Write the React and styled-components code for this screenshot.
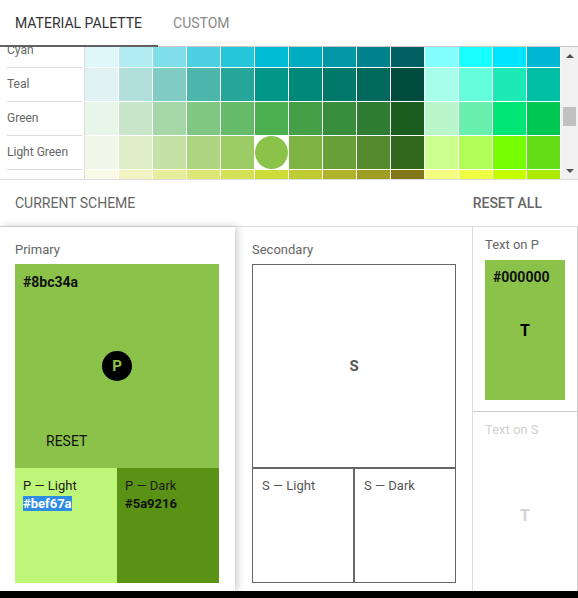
import React, { useRef, useLayoutEffect } from "react";
import styled, { createGlobalStyle } from "styled-components";

const palette = [
  ["Red", "ffebee ffcdd2 ef9a9a e57373 ef5350 f44336 e53935 d32f2f c62828 b71c1c ff8a80 ff5252 ff1744 d50000"],
  ["Pink", "fce4ec f8bbd0 f48fb1 f06292 ec407a e91e63 d81b60 c2185b ad1457 880e4f ff80ab ff4081 f50057 c51162"],
  ["Purple", "f3e5f5 e1bee7 ce93d8 ba68c8 ab47bc 9c27b0 8e24aa 7b1fa2 6a1b9a 4a148c ea80fc e040fb d500f9 aa00ff"],
  ["Deep Purple", "ede7f6 d1c4e9 b39ddb 9575cd 7e57c2 673ab7 5e35b1 512da8 4527a0 311b92 b388ff 7c4dff 651fff 6200ea"],
  ["Indigo", "e8eaf6 c5cae9 9fa8da 7986cb 5c6bc0 3f51b5 3949ab 303f9f 283593 1a237e 8c9eff 536dfe 3d5afe 304ffe"],
  ["Blue", "e3f2fd bbdefb 90caf9 64b5f6 42a5f5 2196f3 1e88e5 1976d2 1565c0 0d47a1 82b1ff 448aff 2979ff 2962ff"],
  ["Light Blue", "e1f5fe b3e5fc 81d4fa 4fc3f7 29b6f6 03a9f4 039be5 0288d1 0277bd 01579b 80d8ff 40c4ff 00b0ff 0091ea"],
  ["Cyan", "e0f7fa b2ebf2 80deea 4dd0e1 26c6da 00bcd4 00acc1 0097a7 00838f 006064 84ffff 18ffff 00e5ff 00b8d4"],
  ["Teal", "e0f2f1 b2dfdb 80cbc4 4db6ac 26a69a 009688 00897b 00796b 00695c 004d40 a7ffeb 64ffda 1de9b6 00bfa5"],
  ["Green", "e8f5e9 c8e6c9 a5d6a7 81c784 66bb6a 4caf50 43a047 388e3c 2e7d32 1b5e20 b9f6ca 69f0ae 00e676 00c853"],
  ["Light Green", "f1f8e9 dcedc8 c5e1a5 aed581 9ccc65 8bc34a 7cb342 689f38 558b2f 33691e ccff90 b2ff59 76ff03 64dd17"],
  ["Lime", "f9fbe7 f0f4c3 e6ee9c dce775 d4e157 cddc39 c0ca33 afb42b 9e9d24 827717 f4ff81 eeff41 c6ff00 aeea00"],
  ["Yellow", "fffde7 fff9c4 fff59d fff176 ffee58 ffeb3b fdd835 fbc02d f9a825 f57f17 ffff8d ffff00 ffea00 ffd600"],
  ["Amber", "fff8e1 ffecb3 ffe082 ffd54f ffca28 ffc107 ffb300 ffa000 ff8f00 ff6f00 ffe57f ffd740 ffc400 ffab00"],
  ["Orange", "fff3e0 ffe0b2 ffcc80 ffb74d ffa726 ff9800 fb8c00 f57c00 ef6c00 e65100 ffd180 ffab40 ff9100 ff6d00"],
  ["Deep Orange", "fbe9e7 ffccbc ffab91 ff8a65 ff7043 ff5722 f4511e e64a19 d84315 bf360c ff9e80 ff6e40 ff3d00 dd2c00"],
  ["Brown", "efebe9 d7ccc8 bcaaa4 a1887f 8d6e63 795548 6d4c41 5d4037 4e342e 3e2723"],
  ["Grey", "fafafa f5f5f5 eeeeee e0e0e0 bdbdbd 9e9e9e 757575 616161 424242 212121"],
  ["Blue Grey", "eceff1 cfd8dc b0bec5 90a4ae 78909c 607d8b 546e7a 455a64 37474f 263238"],
];

const selected = "8bc34a";

// grid geometry (px)
const ROW = 34;
const VIEW = 132;
const SCROLL_TOP = 251;
const TRACK = VIEW - 34;
const THUMB = 19;
const thumbTop = Math.round(
  (SCROLL_TOP / (palette.length * ROW - VIEW)) * (TRACK - THUMB)
) + 4;

const GlobalStyle = createGlobalStyle`
  html, body {
    margin: 0;
    background: #000;
  }
  * {
    box-sizing: border-box;
  }
`;

const App = () => {
  const viewRef = useRef(null);

  useLayoutEffect(() => {
    if (viewRef.current) viewRef.current.scrollTop = SCROLL_TOP;
  }, []);

  return (
    <Page>
      <GlobalStyle />
      <TabBar>
        <Tab $active>Material palette</Tab>
        <Tab>Custom</Tab>
      </TabBar>

      <PaletteArea>
        <PaletteView ref={viewRef}>
          {palette.map(([name, hexes]) => (
            <PaletteRow key={name}>
              <RowLabel>
                <RowName>{name}</RowName>
              </RowLabel>
              {hexes.split(" ").map((hex) => (
                <Cell key={hex} $color={"#" + hex} $selected={hex === selected}>
                  {hex === selected && <Dot $color={"#" + hex} />}
                </Cell>
              ))}
            </PaletteRow>
          ))}
        </PaletteView>
        <Scrollbar>
          <ScrollArrow $dir="up" />
          <Track>
            <Thumb $top={thumbTop} />
          </Track>
          <ScrollArrow $dir="down" />
        </Scrollbar>
      </PaletteArea>

      <SchemeBar>
        <SchemeTitle>Current scheme</SchemeTitle>
        <TextButton>Reset all</TextButton>
      </SchemeBar>

      <Scheme>
        <PrimaryCard>
          <CardLabel>Primary</CardLabel>
          <MainSwatch $bg="#8bc34a">
            <Hex>#8bc34a</Hex>
            <Badge>P</Badge>
            <ResetButton>Reset</ResetButton>
          </MainSwatch>
          <VariantRow>
            <Variant $bg="#bef67a">
              <VariantName>P — Light</VariantName>
              <Hex $small>
                <Selection>#bef67a</Selection>
              </Hex>
            </Variant>
            <Variant $bg="#5a9216">
              <VariantName>P — Dark</VariantName>
              <Hex $small>#5a9216</Hex>
            </Variant>
          </VariantRow>
        </PrimaryCard>

        <SecondaryCard>
          <CardLabel>Secondary</CardLabel>
          <EmptySwatch>
            <EmptyLetter>S</EmptyLetter>
          </EmptySwatch>
          <VariantRow>
            <EmptyVariant>
              <VariantName $muted>S — Light</VariantName>
            </EmptyVariant>
            <EmptyVariant>
              <VariantName $muted>S — Dark</VariantName>
            </EmptyVariant>
          </VariantRow>
        </SecondaryCard>

        <TextColumn>
          <TextSection $divided>
            <CardLabel $compact>Text on P</CardLabel>
            <TextSwatch $bg="#8bc34a">
              <Hex>#000000</Hex>
              <TextLetter>T</TextLetter>
            </TextSwatch>
          </TextSection>
          <TextSection>
            <CardLabel $compact $disabled>Text on S</CardLabel>
            <TextSwatch>
              <TextLetter $disabled>T</TextLetter>
            </TextSwatch>
          </TextSection>
        </TextColumn>
      </Scheme>
    </Page>
  );
};

const Page = styled.div`
  width: 578px;
  height: 591px;
  overflow: hidden;
  background: #fff;
  font-family: Roboto, "Liberation Sans", sans-serif;
  display: flex;
  flex-direction: column;
`;

const TabBar = styled.div`
  display: flex;
  height: 47px;
  flex-shrink: 0;
  border-bottom: 1px solid #c8c8c8;
`;

const Tab = styled.div`
  display: flex;
  align-items: center;
  padding: 0 16px 0 15px;
  margin-bottom: -1px;
  font-size: 14px;
  text-transform: uppercase;
  color: ${(p) => (p.$active ? "#333" : "#8a8a8a")};
  border-bottom: 2px solid ${(p) => (p.$active ? "#616161" : "transparent")};
`;

const PaletteArea = styled.div`
  display: flex;
  height: 133px;
  flex-shrink: 0;
  border-bottom: 1px solid #ddd;
`;

const PaletteView = styled.div`
  flex: 1;
  overflow: hidden;
`;

const Scrollbar = styled.div`
  width: 17px;
  flex-shrink: 0;
  display: flex;
  flex-direction: column;
  background: #f1f1f1;
`;

const ScrollArrow = styled.div`
  height: 17px;
  display: flex;
  align-items: center;
  justify-content: center;

  &::before {
    content: "";
    border-left: 4px solid transparent;
    border-right: 4px solid transparent;
    ${(p) =>
      p.$dir === "up"
        ? "border-bottom: 4px solid #505050;"
        : "border-top: 4px solid #505050;"}
  }
`;

const Track = styled.div`
  flex: 1;
  padding: 0 2px;
`;

const Thumb = styled.div`
  height: ${THUMB}px;
  margin-top: ${(p) => p.$top}px;
  background: #c1c1c1;
`;

const PaletteRow = styled.div`
  display: flex;
  height: ${ROW}px;
`;

const RowLabel = styled.div`
  width: 85px;
  flex-shrink: 0;
  padding: 0 2px 0 7px;
  border-right: 1px solid #ddd;
`;

const RowName = styled.div`
  height: ${ROW}px;
  padding-bottom: 1px;
  display: flex;
  align-items: center;
  border-bottom: 1px solid #ddd;
  font-size: 12px;
  color: #666;
  white-space: nowrap;
`;

const Cell = styled.div`
  width: ${ROW}px;
  height: ${ROW}px;
  flex-shrink: 0;
  border-right: 1px solid #fff;
  border-bottom: 1px solid #fff;
  background: ${(p) => (p.$selected ? "#fff" : p.$color)};
`;

const Dot = styled.div`
  width: 100%;
  height: 100%;
  border-radius: 50%;
  background: ${(p) => p.$color};
`;

const SchemeBar = styled.div`
  height: 46px;
  flex-shrink: 0;
  display: flex;
  align-items: center;
  justify-content: space-between;
  padding: 0 28px 0 15px;
`;

const SchemeTitle = styled.div`
  font-size: 14px;
  color: #666;
  text-transform: uppercase;
`;

const TextButton = styled.div`
  padding: 0 8px;
  font-size: 14px;
  font-weight: 500;
  color: #666;
  text-transform: uppercase;
`;

const Scheme = styled.div`
  flex: 1;
  display: flex;
  border-top: 1px solid #ddd;
  min-height: 0;
`;

const PrimaryCard = styled.div`
  width: 235px;
  flex-shrink: 0;
  padding: 0 16px 0 15px;
  background: #fff;
  position: relative;
  z-index: 1;
  box-shadow: 2px 0 8px rgba(0, 0, 0, 0.22);
`;

const SecondaryCard = styled.div`
  width: 237px;
  flex-shrink: 0;
  padding: 0 16px 0 17px;
`;

const CardLabel = styled.div`
  padding-top: ${(p) => (p.$compact ? 10 : 15)}px;
  margin-bottom: ${(p) => (p.$compact ? 7 : 6)}px;
  line-height: 16px;
  font-size: 13px;
  color: ${(p) => (p.$disabled ? "#cfcfcf" : "#666")};
`;

const MainSwatch = styled.div`
  height: 204px;
  display: grid;
  grid-template-rows: 1fr auto 1fr;
  justify-items: center;
  background: ${(p) => p.$bg};

  & > :first-child {
    justify-self: start;
    align-self: start;
    padding: 9px 8px 0;
  }
`;

const Hex = styled.div`
  font-size: ${(p) => (p.$small ? 13 : 14)}px;
  font-weight: 700;
  line-height: 18px;
  color: #111;
`;

const Selection = styled.span`
  background: #2f8de6;
  color: #fff;
`;

const Badge = styled.div`
  width: 30px;
  height: 30px;
  border-radius: 50%;
  background: #000;
  color: #8bc34a;
  font-size: 15px;
  font-weight: 700;
  display: flex;
  align-items: center;
  justify-content: center;
`;

const ResetButton = styled.div`
  justify-self: start;
  align-self: end;
  padding: 0 0 19px 31px;
  line-height: 16px;
  font-size: 14px;
  color: #111;
  text-transform: uppercase;
`;

const VariantRow = styled.div`
  display: flex;
  height: 115px;
`;

const Variant = styled.div`
  flex: 1;
  padding: 9px 8px;
  background: ${(p) => p.$bg};
`;

const VariantName = styled.div`
  font-size: 13px;
  line-height: 18px;
  color: ${(p) => (p.$muted ? "#555" : "#1a1a1a")};
`;

const EmptySwatch = styled.div`
  height: 204px;
  border: 1px solid #666;
  display: flex;
  align-items: center;
  justify-content: center;
`;

const EmptyLetter = styled.div`
  font-size: 15px;
  font-weight: 700;
  color: #555;
`;

const EmptyVariant = styled.div`
  flex: 1;
  padding: 8px 9px;
  border: 1px solid #666;
`;

const TextColumn = styled.div`
  width: 106px;
  flex-shrink: 0;
  border-left: 1px solid #ddd;
  border-right: 1px solid #ccc;
  display: flex;
  flex-direction: column;
`;

const TextSection = styled.div`
  padding: 0 12px 11px;
  border-bottom: ${(p) => (p.$divided ? "1px solid #ccc" : "none")};
`;

const TextSwatch = styled.div`
  height: 140px;
  display: grid;
  grid-template-rows: 1fr auto 1fr;
  justify-items: center;
  background: ${(p) => p.$bg || "transparent"};

  & > ${Hex} {
    justify-self: start;
    align-self: start;
    padding: 8px 8px 0;
  }
`;

const TextLetter = styled.div`
  grid-row: 2;
  font-size: 16px;
  font-weight: 700;
  color: ${(p) => (p.$disabled ? "#d4d4d4" : "#000")};
`;

export default App;
